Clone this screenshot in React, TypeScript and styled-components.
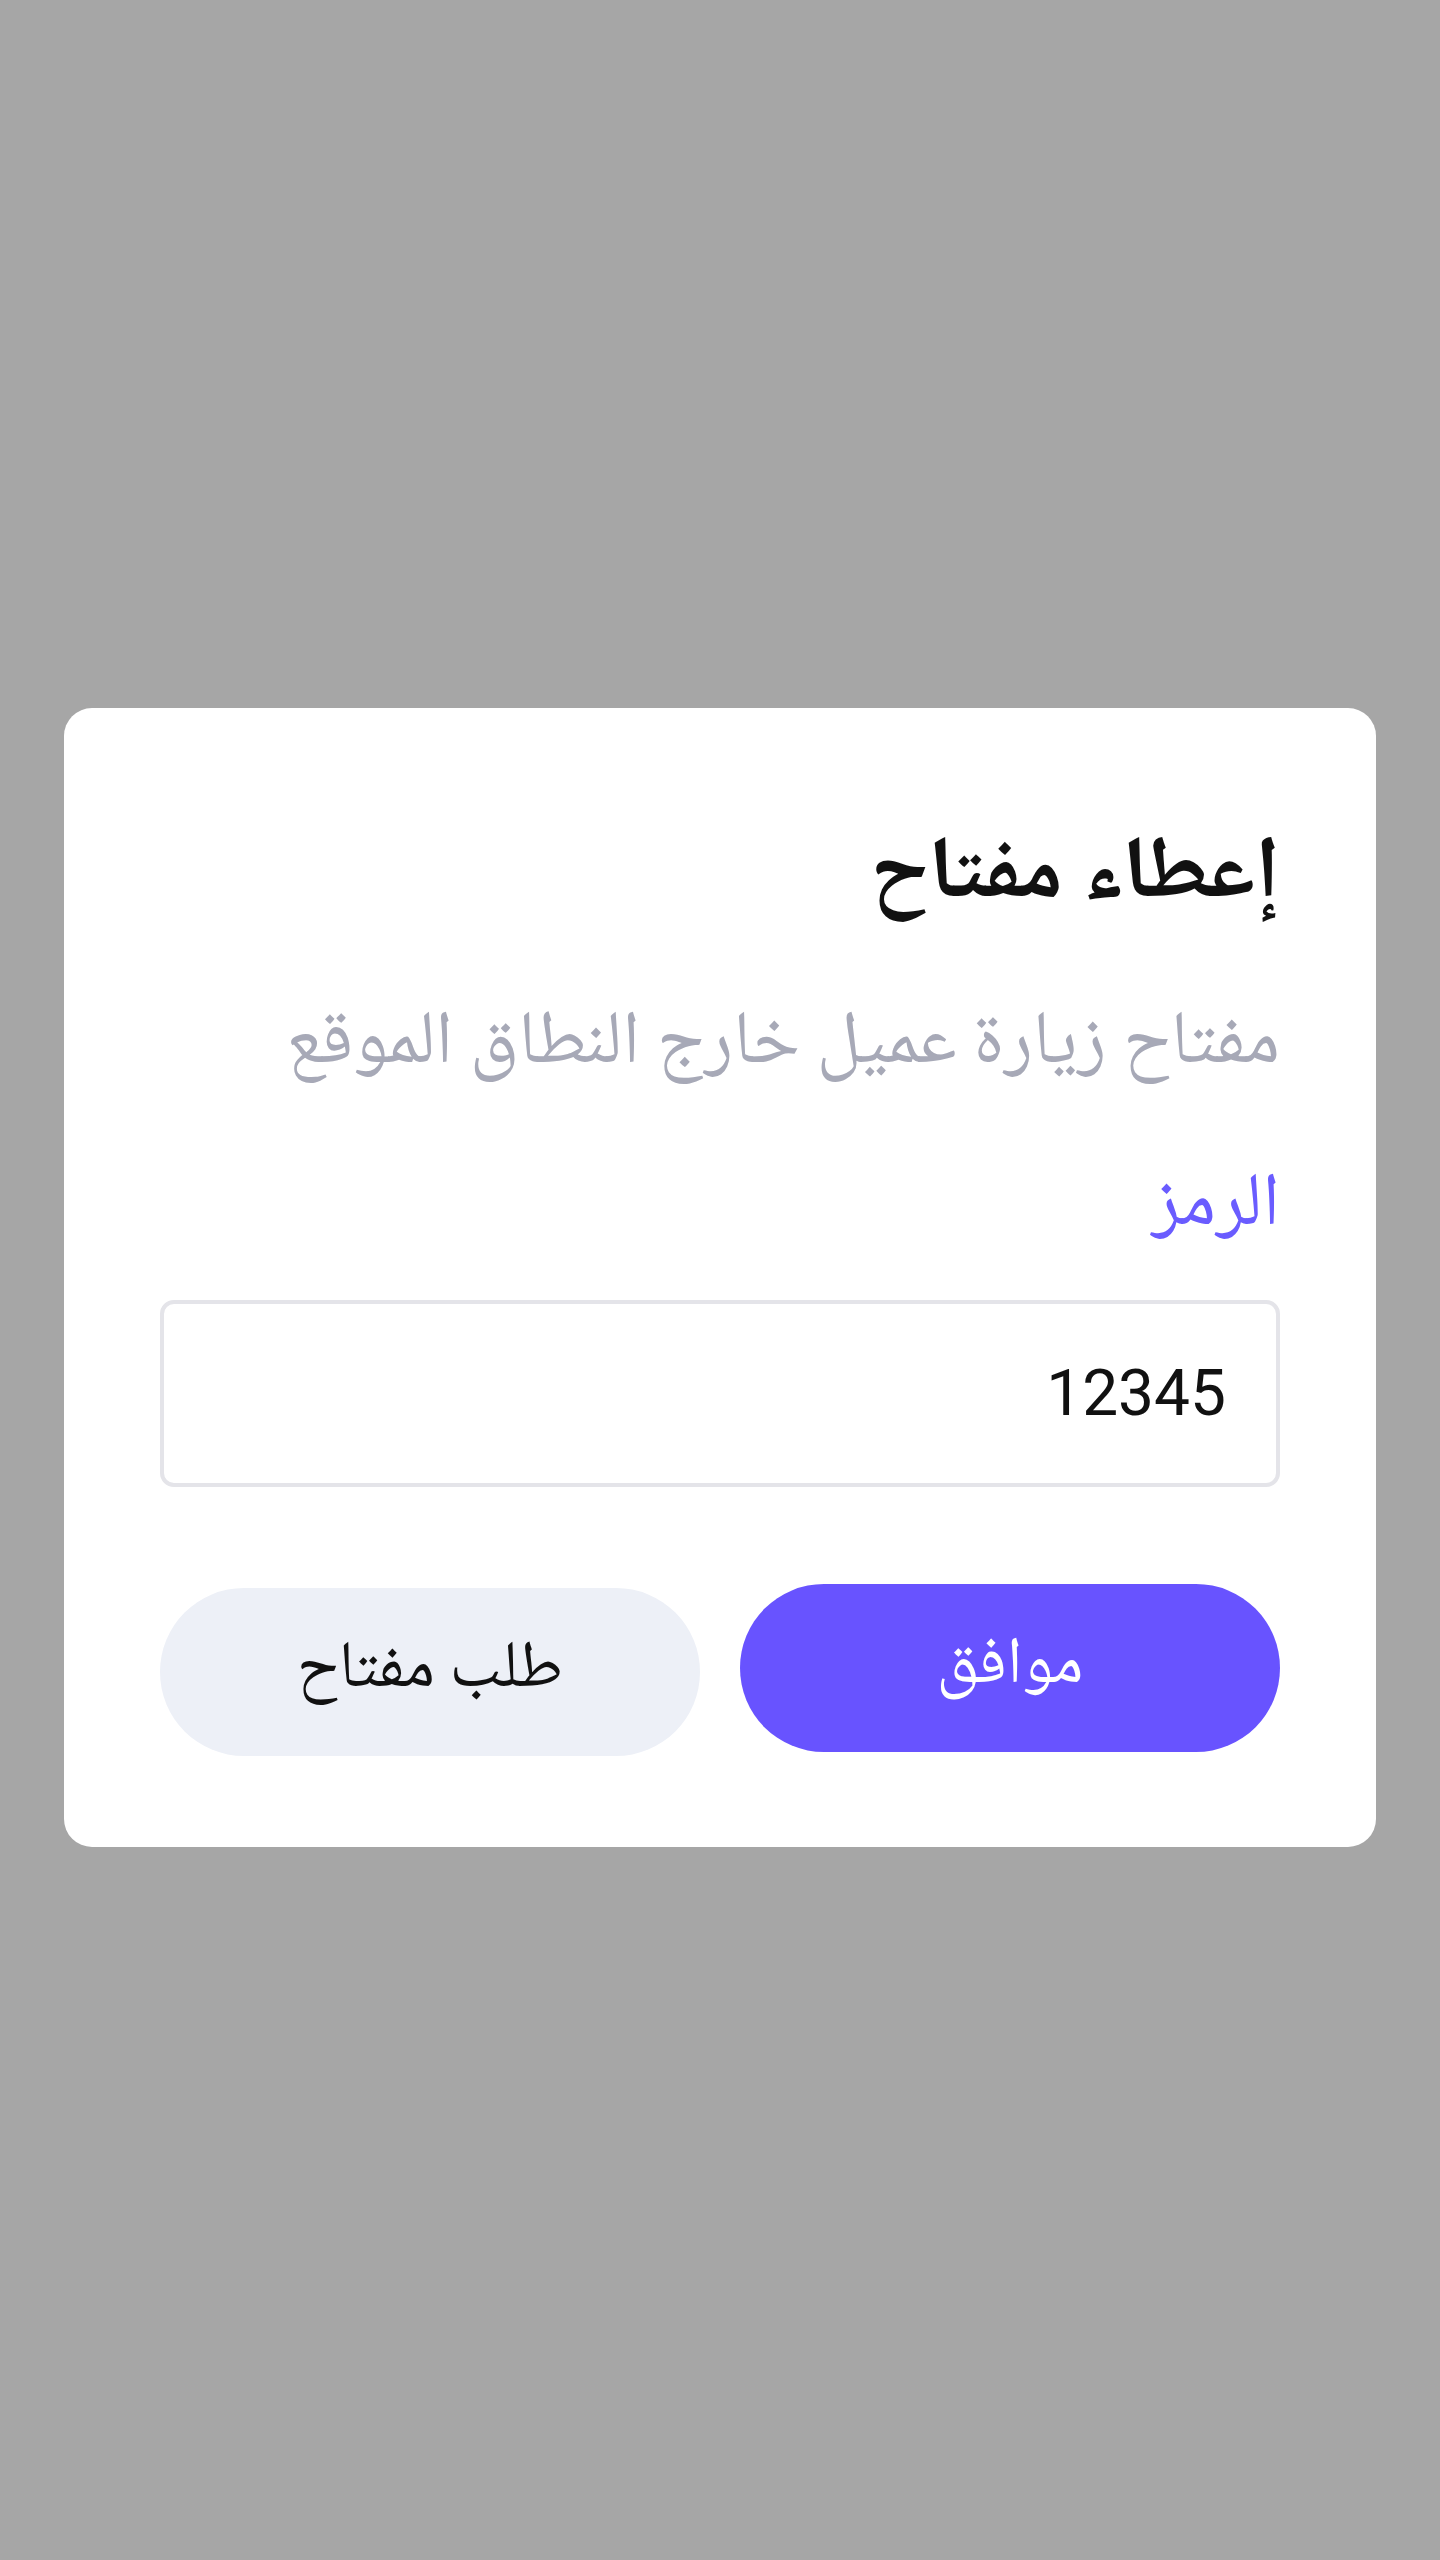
import React from "react";
import styled, { createGlobalStyle } from "styled-components";

const Global = createGlobalStyle`
  html, body { margin: 0; padding: 0; }
  body { background: #a6a6a6; font-family: "Noto Naskh Arabic", "DejaVu Sans", serif; }
`;

const Screen = styled.div`
  min-height: 2560px;
  display: flex;
  align-items: center;
  justify-content: center;
  padding: 0 64px 5px;
  box-sizing: border-box;
`;

const Card = styled.div`
  direction: rtl;
  width: 100%;
  background: #ffffff;
  border-radius: 28px;
  padding: 100px 96px 91px;
  box-sizing: border-box;
  display: flex;
  flex-direction: column;
`;

const Title = styled.h1`
  margin: 0;
  font-size: 88px;
  font-weight: 700;
  color: #111111;
  line-height: 140px;
`;

const Subtitle = styled.p`
  margin: 38px 0 0;
  font-size: 75px;
  font-weight: 400;
  color: #a7a9b7;
  line-height: 120px;
`;

const Label = styled.label`
  margin: 42px 0 0;
  font-size: 75px;
  color: #6a5cff;
  line-height: 120px;
`;

const Input = styled.input`
  margin-top: 32px;
  height: 187px;
  box-sizing: border-box;
  border: 4px solid #e4e4e9;
  border-radius: 14px;
  padding: 0 50px;
  font-family: Roboto, sans-serif;
  font-size: 64px;
  color: #111111;
  direction: rtl;
  outline: none;
  background: #fff;
`;

const Actions = styled.div`
  margin-top: 97px;
  display: flex;
  gap: 40px;
  align-items: flex-start;
`;

const Button = styled.button<{ $primary?: boolean }>`
  flex: 1;
  height: 168px;
  margin-top: ${(p) => (p.$primary ? "0" : "4px")};
  border: none;
  border-radius: 84px;
  background: ${(p) => (p.$primary ? "#6853ff" : "#edf0f7")};
  color: ${(p) => (p.$primary ? "#ffffff" : "#111111")};
  font-family: "Noto Naskh Arabic", "DejaVu Sans", serif;
  font-size: 66px;
  line-height: 1;
  padding: 0;
  cursor: pointer;
`;

export default function App() {
  return (
    <>
      <Global />
      <Screen>
        <Card>
          <Title>إعطاء مفتاح</Title>
          <Subtitle>مفتاح زيارة عميل خارج النطاق الموقع</Subtitle>
          <Label>الرمز</Label>
          <Input defaultValue="12345" />
          <Actions>
            <Button $primary>موافق</Button>
            <Button>طلب مفتاح</Button>
          </Actions>
        </Card>
      </Screen>
    </>
  );
}
